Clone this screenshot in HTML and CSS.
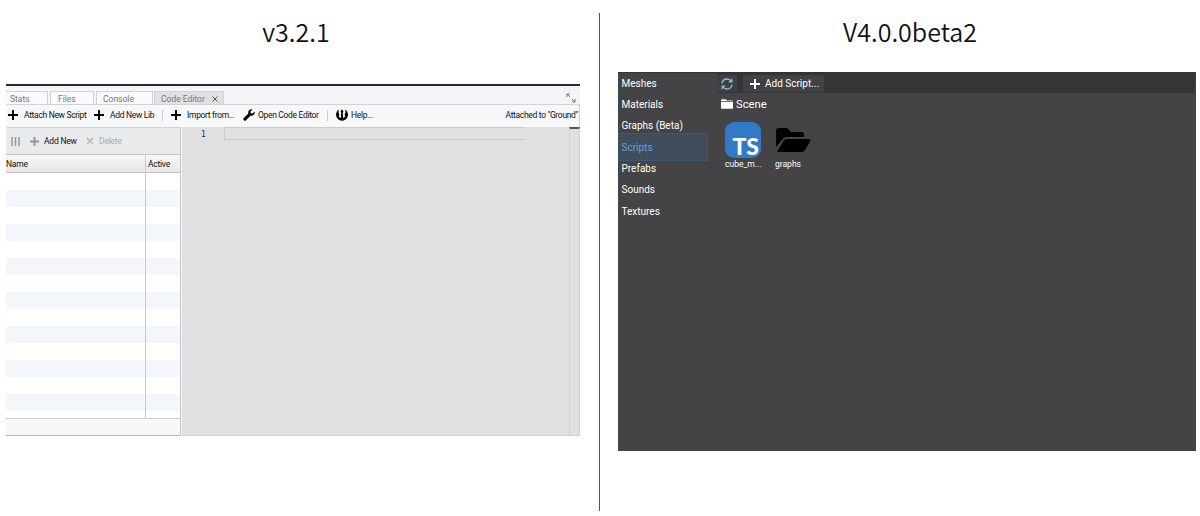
FILE: index.html
```
<!DOCTYPE html>
<html lang="en">
<head>
  <meta charset="UTF-8">
  <meta name="viewport" content="width=device-width, initial-scale=1.0">
  <title>Editor versions</title>
  <link rel="stylesheet" href="styles.css">
</head>
<body>
  <section class="version version-old">
    <h1>v3.2.1</h1>
    <div class="old-editor">
      <div class="tabs">
        <span class="tab tab-stats">Stats</span>
        <span class="tab tab-files">Files</span>
        <span class="tab tab-console">Console</span>
        <span class="tab tab-code active">Code Editor
          <svg class="close" viewBox="0 0 6 6"><path d="M.5 .5l5 5M5.5 .5l-5 5" stroke="#555" fill="none"/></svg>
        </span>
        <svg class="expand" viewBox="0 0 10 10"><path d="M1 4V1h3M1 1l3 3M9 6v3H6M9 9L6 6" stroke="#777" fill="none"/></svg>
      </div>
      <div class="toolbar">
        <button class="tool tool-attach"><svg class="plus" viewBox="0 0 10 10"><path d="M5 0v10M0 5h10" stroke="#000" stroke-width="2"/></svg>Attach New Script</button>
        <button class="tool tool-lib"><svg class="plus" viewBox="0 0 10 10"><path d="M5 0v10M0 5h10" stroke="#000" stroke-width="2"/></svg>Add New Lib</button>
        <i class="separator"></i>
        <button class="tool tool-import"><svg class="plus" viewBox="0 0 10 10"><path d="M5 0v10M0 5h10" stroke="#000" stroke-width="2"/></svg>Import from...</button>
        <button class="tool tool-open"><svg class="wrench" viewBox="0 0 12 12"><path d="M11.6 2.5L9.6 4.5 7.7 4.2 7.4 2.4 9.4.4C7.2-.3 5 1.3 5.2 3.8L5.3 4.6.6 9.2C-.5 10.5 1.4 12.5 2.8 11.4L7.4 6.7C10 7.3 12.4 5 11.6 2.5z"/></svg>Open Code Editor</button>
        <i class="separator"></i>
        <button class="tool tool-help"><svg class="rebel" viewBox="0 0 12 12"><path d="M3.2.6C.4 1.800-.6 5.200.5 8c1.900 4.900 9.100 4.900 11 0C12.600 5.200 11.600 1.800 8.800.600c1 1.500 1 2.500.300 3.700-.6 1-.5 2.300.3 3-.5.900-1.200 1.400-2.200 1.600L6.800 3.500 7.500 2.500 6 .300 4.500 2.500l.7 1-.4 5.400C3.800 8.700 3.100 8.200 2.600 7.300c.8-.7.9-2 .3-3C2.200 3.100 2.200 2.100 3.200.600z"/></svg>Help...</button>
        <span class="attached">Attached to "Ground"</span>
      </div>
      <div class="workspace">
        <div class="scripts">
          <div class="scripts-toolbar">
            <svg class="columns" viewBox="0 0 9 9"><path d="M1 0v9M4.500 0v9M8 0v9" stroke="#8d99a7" stroke-width="1.500"/></svg>
            <svg class="plus-small" viewBox="0 0 9 9"><path d="M4.500 0v9M0 4.500h9" stroke="#8d99a7" stroke-width="2"/></svg>
            <span class="add-new">Add New</span>
            <svg class="cross" viewBox="0 0 8 8"><path d="M1 1l6 6M7 1L1 7" stroke="#bfc0c3" stroke-width="1.800"/></svg>
            <span class="delete">Delete</span>
          </div>
          <div class="grid-head"><span>Name</span><span>Active</span></div>
          <div class="grid-rows"><div></div><div></div></div>
          <div class="grid-foot"></div>
        </div>
        <div class="code">
          <span class="line-number">1</span>
          <div class="current-line"></div>
          <div class="scrollbar"></div>
        </div>
      </div>
    </div>
  </section>
  <section class="version version-new">
    <h1>V4.0.0beta2</h1>
    <div class="assets">
      <ul class="categories">
        <li>Meshes</li>
        <li>Materials</li>
        <li>Graphs (Beta)</li>
        <li class="selected">Scripts</li>
        <li>Prefabs</li>
        <li>Sounds</li>
        <li>Textures</li>
      </ul>
      <div class="browser">
        <div class="actions">
          <button class="refresh"><svg viewBox="0 0 12 12"><path d="M1 5.500C1.400 2.800 3.500 1 6 1c2 0 3.400 1 4.300 2.500M11 6.500C10.600 9.200 8.500 11 6 11 4 11 2.600 10 1.700 8.500M10.800.800v3H7.800M1.200 11.200v-3h3" stroke="#a9b5be" stroke-width="1.300" fill="none"/></svg></button>
          <button class="add-script"><svg viewBox="0 0 10 10"><path d="M5 0v10M0 5h10" stroke="#fff" stroke-width="2"/></svg>Add Script...</button>
        </div>
        <div class="path"><svg viewBox="0 0 12 10"><path d="M0 2.200V1Q0 .3.700.300H4.500L6 1.600H11.300Q12 1.600 12 2.200zM0 3h12v6Q12 9.700 11.300 9.700H.700Q0 9.700 0 9z" fill="#fff"/></svg>Scene</div>
        <div class="items">
          <div class="item">
            <div class="ts-icon">TS</div>
            <span>cube_m...</span>
          </div>
          <div class="item">
            <svg class="folder" viewBox="0 0 36 36"><path d="M1 25V9Q1 6 4 6H12L16 10H26Q29 10 29 13V15H12Q8.500 15 7 18zM2 30L8.500 19Q9.500 17 12 17H34Q36.500 17 35 19.500L30 28Q28.800 30 26.500 30z"/></svg>
            <span>graphs</span>
          </div>
        </div>
      </div>
    </div>
  </section>
</body>
</html>
```
FILE: styles.css
```
* {
  box-sizing: border-box;
}
body {
  margin: 0;
  width: 1200px;
  height: 516px;
  display: flex;
  overflow: hidden;
  background: #fff;
  font-family: Roboto, sans-serif;
  color: #111;
}
svg {
  display: block;
  flex: none;
}
button {
  border: 0;
  padding: 0;
  background: none;
  color: inherit;
  font: inherit;
  letter-spacing: inherit;
  display: flex;
  align-items: center;
}
.version {
  height: 498px;
  margin-top: 13px;
}
.version-old {
  width: 600px;
  padding-left: 6px;
  border-right: 1px solid #555;
}
.version-new {
  width: 600px;
  padding-left: 18px;
}
h1 {
  margin: 0;
  height: 40px;
  line-height: 37px;
  font-family: "Noto Sans CJK JP", sans-serif;
  font-size: 25px;
  font-weight: 350;
  text-align: center;
}
.version-old h1 {
  width: 580px;
}
.version-new h1 {
  width: 584px;
}

/* old editor */
.old-editor {
  width: 574px;
  height: 352px;
  margin-top: 31px;
  border-top: 2px solid #292735;
  background: #f5f5f7;
  font-size: 8.5px;
  letter-spacing: -0.32px;
  display: flex;
  flex-direction: column;
}
.tabs {
  height: 19px;
  padding-top: 5px;
  display: flex;
  align-items: stretch;
  gap: 2px;
  border-bottom: 1px solid #d2d3d6;
}
.tab {
  display: flex;
  align-items: center;
  padding: 1px 0 0 9px;
  border: 1px solid #d2d3d6;
  border-bottom: 0;
  background: #fafafc;
  color: #777;
  font-size: 8.5px;
  letter-spacing: 0;
}
.tab-stats {
  width: 42px;
  padding-left: 4px;
  border-left: 0;
}
.tab-files {
  width: 44px;
  padding-left: 7px;
}
.tab-console {
  width: 57px;
  padding-left: 6px;
}
.tab-code {
  width: 70px;
  padding-left: 6px;
}
.tab.active {
  margin-left: -1px;
  background: #e1e1e3;
}
.close {
  width: 6px;
  height: 6px;
  margin-left: 7px;
}
.expand {
  width: 10px;
  height: 10px;
  margin: 2px 4px 0 auto;
}
.toolbar {
  height: 22px;
  padding: 0 2px 2px;
  display: flex;
  align-items: center;
  border-right: 1px solid #d2d3d6;
  background: #f7f8fa;
}
.tool {
  flex: none;
  white-space: nowrap;
}
.plus {
  width: 10px;
  height: 10px;
  margin-right: 6px;
}
.tool-attach {
  width: 86px;
}
.tool-lib {
  width: 68px;
}
.tool-import {
  width: 72px;
}
.tool-open {
  width: 84px;
}
.separator {
  width: 1px;
  height: 11px;
  margin-right: 8px;
  background: #c9cbd0;
}
.wrench,
.rebel {
  width: 12px;
  height: 12px;
  margin-right: 3px;
}
.attached {
  margin-left: auto;
  margin-right: -1px;
}
.workspace {
  height: 309px;
  display: flex;
}
.scripts {
  width: 175px;
  display: flex;
  flex-direction: column;
  border-top: 1px solid #d2d3d6;
  border-right: 1px solid #c5c5c8;
  border-bottom: 1px solid #b9b9bb;
}
.scripts-toolbar {
  height: 26px;
  padding-left: 5px;
  display: flex;
  align-items: center;
  background: #e9eaec;
  letter-spacing: -0.2px;
}
.columns {
  width: 9px;
  height: 9px;
  margin-right: 10px;
}
.plus-small {
  width: 9px;
  height: 9px;
  margin-right: 5px;
}
.add-new {
  width: 42px;
}
.cross {
  width: 8px;
  height: 8px;
  margin-right: 5px;
}
.delete {
  color: #aaa;
}
.grid-head {
  height: 19px;
  display: grid;
  grid-template-columns: 140px 1fr;
  line-height: 18px;
  letter-spacing: -0.25px;
  border-top: 1px solid #c5c5c8;
  border-bottom: 1px solid #c5c5c8;
  background: linear-gradient(#f8f8f9, #e6e6e8);
}
.grid-head span + span {
  padding-left: 2px;
}
.grid-head span:first-child,
.grid-rows div:first-child {
  border-right: 1px solid #c9cacc;
}
.grid-rows {
  flex: 1;
  display: grid;
  grid-template-columns: 140px 1fr;
  background: repeating-linear-gradient(#fff 0 17px, #f3f6fa 17px 34px);
}
.grid-foot {
  height: 17px;
  border-top: 1px solid #ccc;
  background: #f7f8fa;
}
.code {
  flex: 1;
  display: flex;
  margin-left: 1px;
  background: #e0e0e2;
  border-bottom: 1px solid #d2d2d4;
}
.line-number {
  width: 42px;
  padding: 3px 0 0 19px;
  font-family: "DejaVu Sans Mono", monospace;
  font-size: 8px;
  line-height: 10px;
  color: #222c55;
}
.current-line {
  width: 301px;
  height: 13px;
  border: 1px solid #cbcbcd;
  border-right: 0;
}
.scrollbar {
  width: 11px;
  margin-left: auto;
  border-top: 2px solid #555;
  border-left: 1px solid #d2d2d4;
  border-right: 1px solid #d2d2d4;
}

/* new editor */
.assets {
  width: 578px;
  height: 379px;
  margin-top: 19px;
  display: flex;
  background: #444446;
  border-top: 1px solid #333335;
  color: #fff;
  font-size: 10px;
}
.categories {
  width: 90px;
  margin: -0.5px 0 0;
  padding: 0;
  list-style: none;
}
.categories li {
  height: 21.4px;
  padding-left: 3.5px;
  line-height: 21.4px;
}
.categories .selected {
  height: 28px;
  margin: -3.4px 0 -3.2px;
  line-height: 27px;
  border: 1px solid #3d5874;
  border-left: 0;
  background: #414d5a;
  color: #5fa3e0;
}
.browser {
  flex: 1;
  padding-left: 9px;
}
.actions {
  height: 20px;
  margin-right: 1px;
  padding: 2px 0 1px;
  display: flex;
  gap: 6px;
  background: #353537;
}
.refresh {
  width: 20px;
  justify-content: center;
  background: #3b4148;
}
.refresh svg {
  width: 12px;
  height: 12px;
}
.add-script {
  width: 81px;
  padding-left: 7px;
  background: #424244;
}
.add-script svg {
  width: 10px;
  height: 10px;
  margin-right: 5px;
}
.path {
  height: 22px;
  padding-left: 4px;
  display: flex;
  align-items: center;
  font-size: 11.3px;
}
.path svg {
  width: 12px;
  height: 10px;
  margin-right: 3px;
}
.items {
  display: flex;
  gap: 14px;
  padding: 7px 0 0 8px;
}
.item {
  width: 36px;
  font-size: 8.5px;
}
.item span {
  display: block;
  line-height: 12px;
  white-space: nowrap;
}
.ts-icon {
  height: 36px;
  padding: 8px 2px 0 0;
  border-radius: 9px;
  background: #3279c7;
  font-family: Lato, sans-serif;
  font-size: 23px;
  font-weight: 900;
  line-height: 32px;
  text-align: right;
}
.folder {
  width: 36px;
  height: 36px;
}
```
